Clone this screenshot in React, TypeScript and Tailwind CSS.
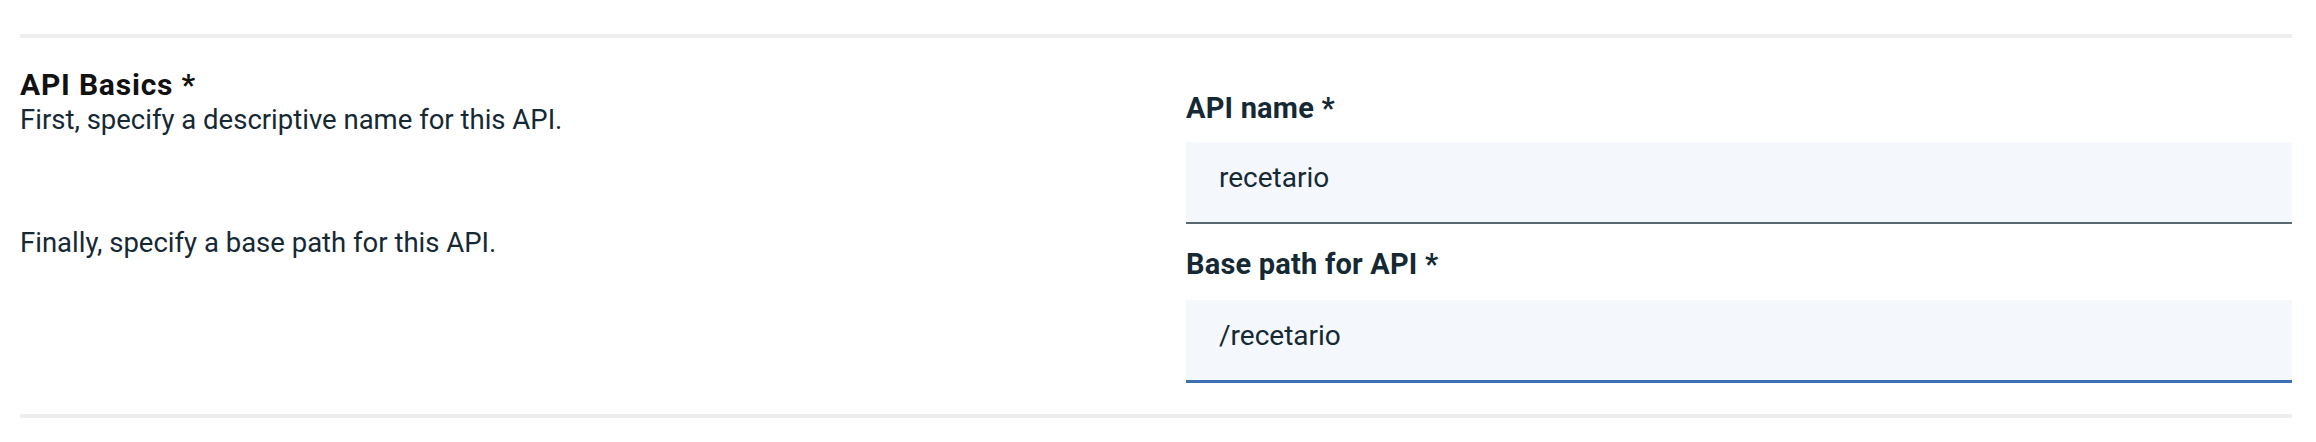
const font = "font-['Roboto','Liberation_Sans',sans-serif]";

type FieldProps = {
  label: string;
  value: string;
  focused?: boolean;
};

const Field = ({ label, value, focused }: FieldProps) => {
  return (
    <div className="flex flex-col">
      <label className="text-[29px] leading-[35px] font-bold tracking-[0.2px] text-[#152935]">
        {label}
      </label>
      <div
        className={
          focused
            ? "mt-[18px] h-[83px] bg-[#f4f7fb] border-b-[3px] border-[#3d70b2] pl-[33px] pt-[18px]"
            : "mt-[16px] h-[82px] bg-[#f4f7fb] border-b-2 border-[#5a6872] pl-[33px] pt-[18px]"
        }
      >
        <span className="text-[28px] leading-[35px] text-[#152935]">{value}</span>
      </div>
    </div>
  );
};

export default function App() {
  return (
    <div className={`w-[2316px] h-[442px] bg-white pt-[34px] pl-[20px] pr-[24px] ${font}`}>
      <div className="h-[4px] bg-[#eeeeee]" />
      <div className="flex">
        <div className="w-[1166px] pt-[29px]">
          <h2 className="text-[30px] leading-[35px] font-bold tracking-[0.8px] text-[#111111]">
            API Basics *
          </h2>
          <p className="text-[27.5px] leading-[36px] text-[#152935]">
            First, specify a descriptive name for this API.
          </p>
          <p className="mt-[87px] text-[27.5px] leading-[36px] text-[#152935]">
            Finally, specify a base path for this API.
          </p>
        </div>
        <div className="flex-1 pt-[53px] pb-[31px]">
          <Field label="API name *" value="recetario" />
          <div className="mt-[23px]">
            <Field label="Base path for API *" value="/recetario" focused />
          </div>
        </div>
      </div>
      <div className="h-[4px] bg-[#eeeeee]" />
    </div>
  );
}
